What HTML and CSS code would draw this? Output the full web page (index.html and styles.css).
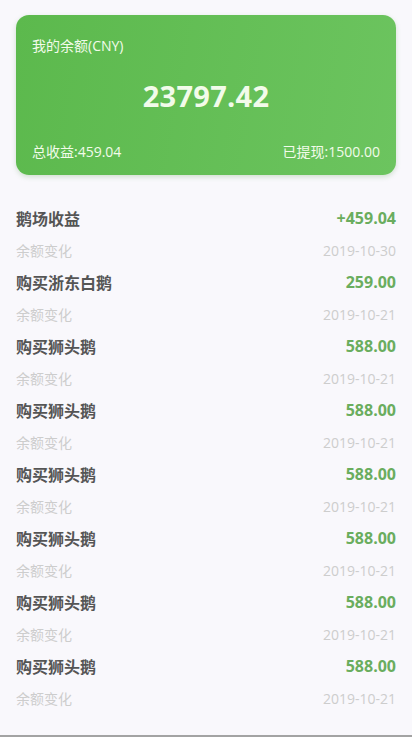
FILE: index.html
```html
<!DOCTYPE html>
<html lang="zh">
<head>
<meta charset="utf-8">
<link rel="stylesheet" href="styles.css">
</head>
<body>
<div class="page">
  <div class="card">
    <div class="card-label">我的余额(CNY)</div>
    <div class="card-total">23797.42</div>
    <div class="card-foot">
      <span>总收益:459.04</span>
      <span>已提现:1500.00</span>
    </div>
  </div>
  <ul class="list">
    <li class="item"><div class="row"><span class="title">鹅场收益</span><span class="amount">+459.04</span></div><div class="row sub"><span>余额变化</span><span>2019-10-30</span></div></li>
    <li class="item"><div class="row"><span class="title">购买浙东白鹅</span><span class="amount">259.00</span></div><div class="row sub"><span>余额变化</span><span>2019-10-21</span></div></li>
    <li class="item"><div class="row"><span class="title">购买狮头鹅</span><span class="amount">588.00</span></div><div class="row sub"><span>余额变化</span><span>2019-10-21</span></div></li>
    <li class="item"><div class="row"><span class="title">购买狮头鹅</span><span class="amount">588.00</span></div><div class="row sub"><span>余额变化</span><span>2019-10-21</span></div></li>
    <li class="item"><div class="row"><span class="title">购买狮头鹅</span><span class="amount">588.00</span></div><div class="row sub"><span>余额变化</span><span>2019-10-21</span></div></li>
    <li class="item"><div class="row"><span class="title">购买狮头鹅</span><span class="amount">588.00</span></div><div class="row sub"><span>余额变化</span><span>2019-10-21</span></div></li>
    <li class="item"><div class="row"><span class="title">购买狮头鹅</span><span class="amount">588.00</span></div><div class="row sub"><span>余额变化</span><span>2019-10-21</span></div></li>
    <li class="item"><div class="row"><span class="title">购买狮头鹅</span><span class="amount">588.00</span></div><div class="row sub"><span>余额变化</span><span>2019-10-21</span></div></li>
  </ul>
  <div class="bottom-line"></div>
</div>
</body>
</html>
```
FILE: styles.css
```css
* { box-sizing: border-box; }
html, body {
  margin: 0;
  padding: 0;
  background: #f9f8fc;
  font-family: "Open Sans", "Noto Sans CJK SC", sans-serif;
}
.page {
  height: 737px;
  display: flex;
  flex-direction: column;
}
.card {
  margin: 15px 16px 0;
  height: 160px;
  border-radius: 13px;
  background: linear-gradient(100deg, #5cb94d 0%, #6cc45f 100%);
  box-shadow: 0 2px 5px rgba(90, 150, 80, 0.25);
  color: #f2fbea;
  padding: 0 16px;
  display: flex;
  flex-direction: column;
}
.card-label {
  font-size: 14px;
  line-height: 18px;
  margin-top: 22px;
}
.card-total {
  text-align: center;
  font-size: 29px;
  font-weight: 700;
  line-height: 40px;
  margin-top: 21px;
  letter-spacing: 0.3px;
}
.card-foot {
  margin-top: 26px;
  display: flex;
  justify-content: space-between;
  font-size: 14px;
  line-height: 20px;
}
.list {
  list-style: none;
  margin: 0;
  padding: 27px 16px 0;
  flex: 1;
}
.item { display: block; }
.row {
  display: flex;
  justify-content: space-between;
  align-items: center;
  height: 32px;
}
.title {
  font-size: 16px;
  font-weight: 700;
  color: #555555;
}
.amount {
  font-size: 16px;
  font-weight: 700;
  color: #6aad5e;
}
.sub {
  font-size: 14px;
  color: #cdcdcd;
}
.bottom-line {
  height: 2px;
  background: #a3a3a3;
}
```
